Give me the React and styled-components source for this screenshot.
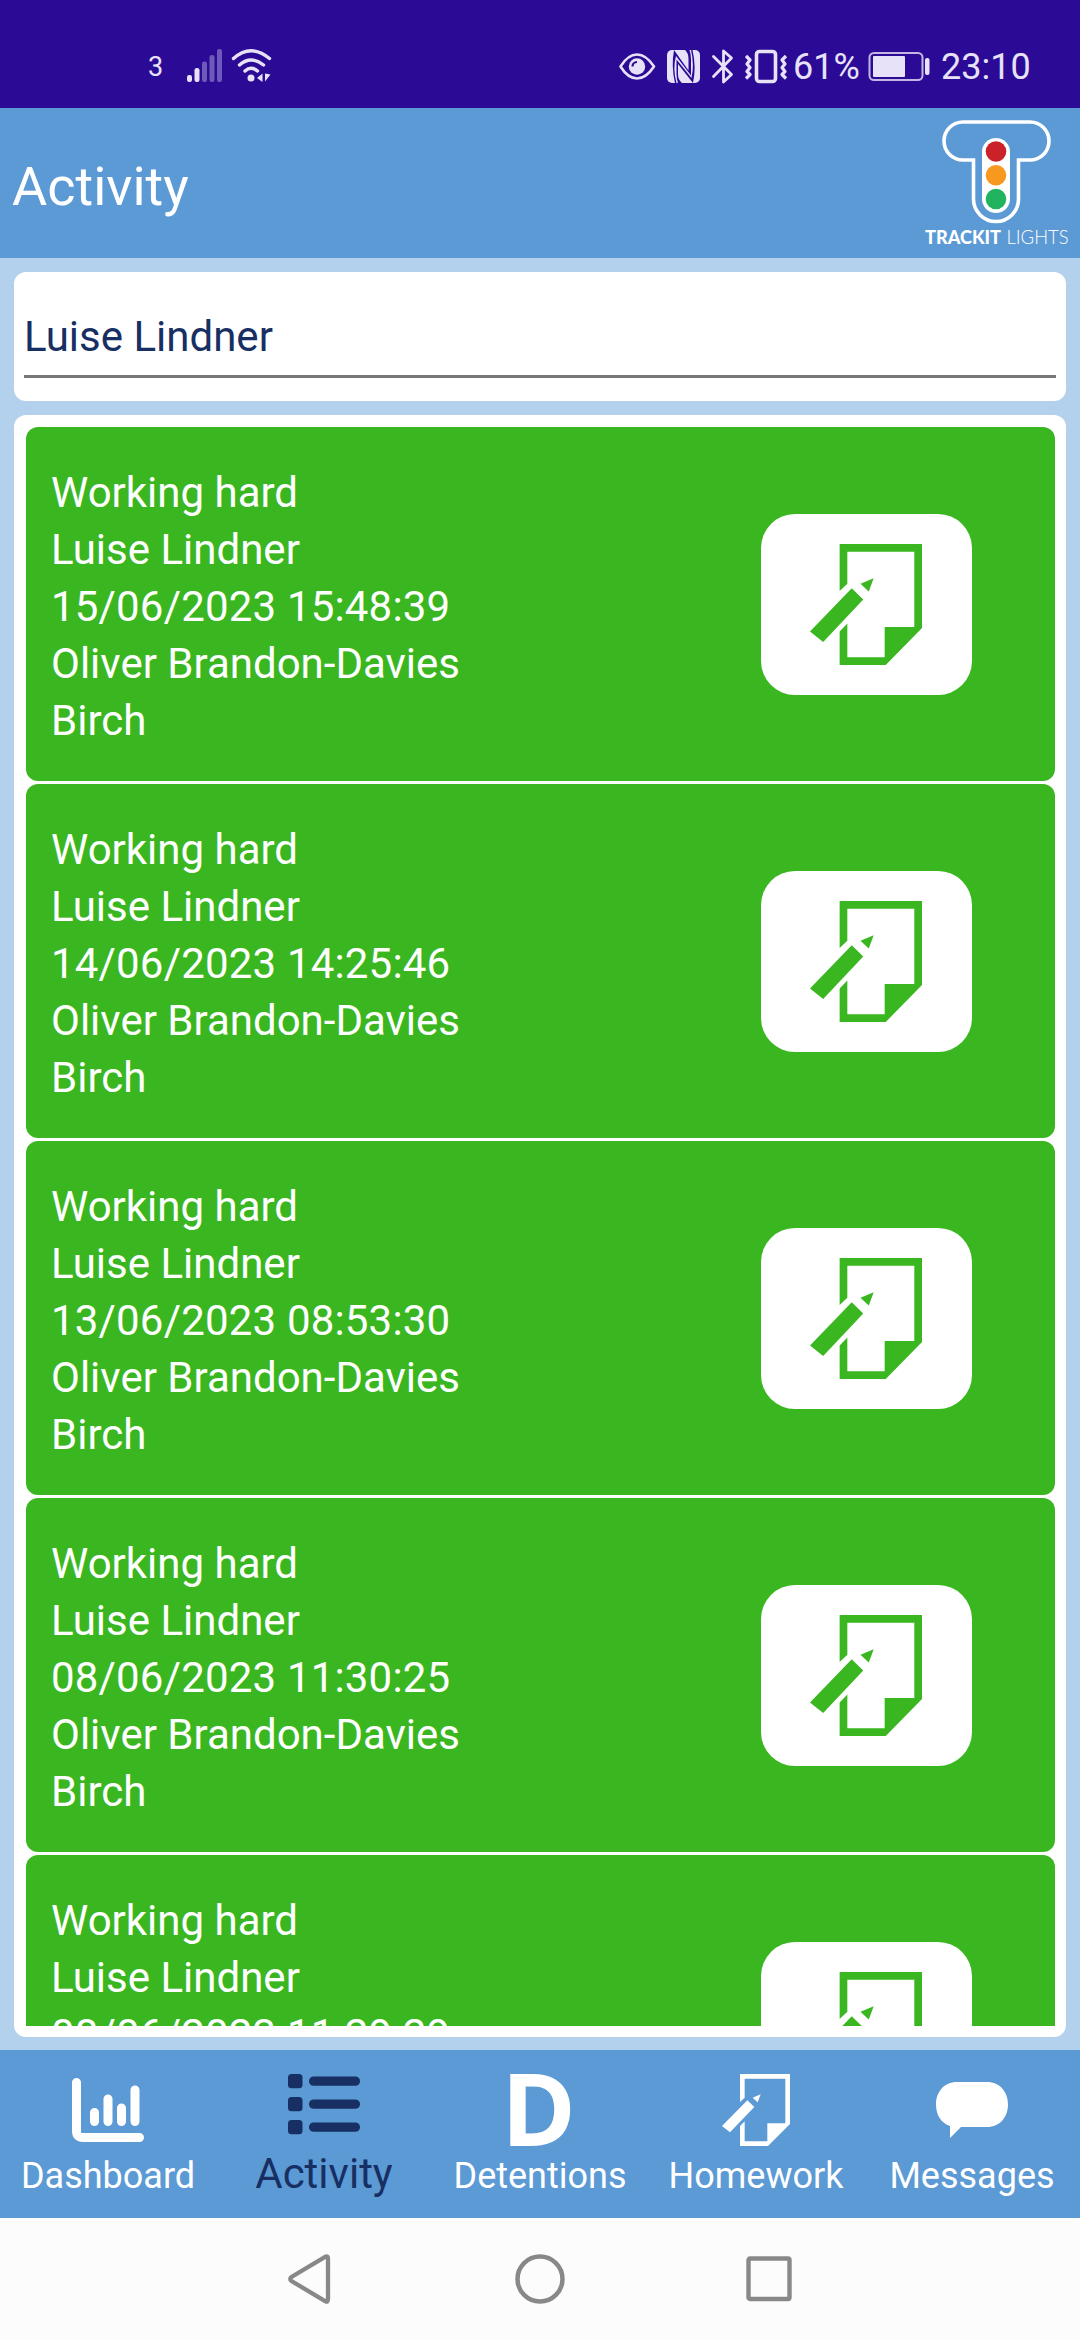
import React from 'react';
import styled, { createGlobalStyle, ThemeProvider } from 'styled-components';

const theme = {
  font: "Roboto, 'Noto Sans', sans-serif",
  status: '#2b0b96',
  statusFg: '#e8e2f8',
  primary: '#5b9ad5',
  background: '#b3d0ec',
  navy: '#172f62',
  green: '#3ab720',
};

const GlobalStyle = createGlobalStyle`
  body {
    margin: 0;
  }

  * {
    box-sizing: border-box;
  }
`;

const AppContainer = styled.div`
  font-family: ${props => props.theme.font};
  width: 1080px;
  height: 2340px;
  overflow: hidden;
  display: grid;
  grid-template-rows: 108px 150px 1fr 168px 122px;
  background: ${props => props.theme.background};
`;

const StatusBar = styled.div`
  display: flex;
  justify-content: space-between;
  padding: 48px 52px 0 148px;
  background: ${props => props.theme.status};
  color: ${props => props.theme.statusFg};
`;

const StatusGroup = styled.div`
  display: flex;
  align-items: flex-start;
  height: 38px;

  svg {
    display: block;
    flex: none;
  }
`;

const SimLabel = styled.span`
  width: 37px;
  font-size: 27px;
  line-height: 38px;
`;

const StatusText = styled.span`
  width: ${props => props.$width}px;
  font-size: 36px;
  line-height: 39px;
  white-space: nowrap;
`;

const Header = styled.header`
  display: flex;
  align-items: center;
  justify-content: space-between;
  padding: 0 8px 0 12px;
  background: ${props => props.theme.primary};
`;

const Title = styled.h1`
  margin: 8px 0 0;
  font-size: 54px;
  font-weight: 400;
  line-height: 64px;
  color: #fff;
`;

const Content = styled.main`
  display: flex;
  flex-direction: column;
  gap: 14px;
  min-height: 0;
  padding: 14px 14px 13px;
`;

const Panel = styled.section`
  padding: ${props => props.$padding};
  border-radius: 12px;
  background: #fff;
`;

const ListPanel = styled(Panel)`
  flex: 1;
  min-height: 0;
`;

const PupilSelect = styled.div`
  height: 106px;
  padding-top: 36px;
  border-bottom: 3px solid #777;
  font-size: 42px;
  line-height: 57px;
  color: ${props => props.theme.navy};
`;

const ActivityList = styled.div`
  display: flex;
  flex-direction: column;
  gap: 3px;
  height: 100%;
  overflow: hidden;
`;

const ActivityCard = styled.article`
  flex: none;
  display: flex;
  align-items: center;
  justify-content: space-between;
  height: 354px;
  padding: 0 83px 0 25px;
  border-radius: 12px;
  background: ${props => props.theme.green};
`;

const Details = styled.div`
  padding-top: 4px;
  font-size: 42px;
  line-height: 57px;
  color: #fff;
`;

const Timestamp = styled.div`
  letter-spacing: 0.18px;
`;

const IconTile = styled.div`
  width: 211px;
  height: 181px;
  padding: 30px 0 0 49px;
  border-radius: 34px;
  background: #fff;
  color: ${props => props.theme.green};
`;

const TabBar = styled.nav`
  display: grid;
  grid-template-columns: repeat(5, 1fr);
  background: ${props => props.theme.primary};
`;

const Tab = styled.div`
  display: flex;
  flex-direction: column;
  align-items: center;
  padding-top: 24px;
  color: ${props => (props.$active ? props.theme.navy : '#fff')};
`;

const TabIcon = styled.div`
  width: 72px;
  height: 72px;
  display: flex;
  justify-content: center;
`;

const TabLetter = styled.span`
  margin-right: 3px;
  font-family: 'Open Sans', sans-serif;
  font-size: 101px;
  font-weight: 700;
  line-height: 66px;
`;

const TabLabel = styled.span`
  font-size: ${props => (props.$active ? 42 : 36)}px;
  line-height: ${props => (props.$active ? 56 : 60)}px;
`;

const SystemBar = styled.div`
  display: flex;
  justify-content: center;
  padding-top: 36px;
  gap: 181px;
  background: #fcfcfc;
`;

const SignalIcon = () => (
  <svg width="38" height="34" viewBox="0 0 38 34" fill="currentColor">
    <rect x="2" y="27" width="5" height="7" rx="2.2" />
    <rect x="9.5" y="20" width="5" height="14" rx="2.2" />
    <g opacity="0.36">
      <rect x="17" y="13.5" width="5" height="20.5" rx="2.2" />
      <rect x="24.5" y="7" width="5" height="27" rx="2.2" />
      <rect x="32" y="1" width="5" height="33" rx="2.2" />
    </g>
  </svg>
);

const WifiIcon = () => (
  <svg width="52" height="36" viewBox="2 0 52 36" fill="none" stroke="currentColor">
    <g strokeWidth="3.4" strokeLinecap="round">
      <path d="M12.5 10.5Q30 -5 48.5 10.5" />
      <path d="M18.5 17Q30 7 42.5 17" />
      <path d="M24 23Q30 17.5 36.5 23" />
    </g>
    <circle cx="30" cy="30" r="3.5" fill="currentColor" stroke="none" />
    <path d="M36 30l5.5-4.5v8.5zM44 25.5v8l5.500-7z" fill="currentColor" stroke="none" />
  </svg>
);

const EyeIcon = () => (
  <svg width="48" height="36" viewBox="0 0 48 36">
    <path
      d="M1.500 18.500Q9 6.500 18 6.500T35 18.500Q27 30.500 18 30.500T1.500 18.500Z"
      fill="none"
      stroke="currentColor"
      strokeWidth="2.6"
      strokeLinejoin="round"
    />
    <circle cx="18" cy="18.5" r="8.2" fill="currentColor" />
    <path d="M13.5 18.5a4.5 4.5 0 0 1 4.500-4.500" fill="none" stroke="#2b0b96" strokeWidth="2.2" />
  </svg>
);

const NfcIcon = () => (
  <svg width="44" height="36" viewBox="0 0 44 36">
    <rect y="2" width="33" height="33" rx="5" fill="currentColor" />
    <g fill="#2b0b96">
      <path d="M7 2L21.500 22.500V11Q21.500 5 18 2H22.500Q24 6 24 11V27.500L9 8Q5.500 20 9.500 35H8Q4 18 7 2Z" />
      <path d="M26 35L11 16V26Q11 32 15 35H11Q9.500 31 9.500 26V11.500L24.500 30Q27.500 17 24 2H25.500Q29.500 19 26 35Z" />
    </g>
  </svg>
);

const BluetoothIcon = () => (
  <svg width="34" height="36" viewBox="0 0 34 36" fill="none" stroke="currentColor">
    <path d="M2.500 8.500L20.500 26.500L12.500 34V3L20.500 10L2.500 28.500" strokeWidth="2.8" strokeLinecap="round" strokeLinejoin="round" />
  </svg>
);

const VibrateIcon = () => (
  <svg width="48" height="36" viewBox="0 0 48 36" fill="none" stroke="currentColor">
    <rect x="11.5" y="3.5" width="19" height="30" rx="3" strokeWidth="3.6" />
    <g strokeWidth="3.2" strokeLinejoin="round">
      <path d="M1 8l4 4-3 4 3 3.500-3 4 3 3-4 4" />
      <path d="M41 8l-4 4 3 4-3 3.500 3 4-3 3 4 4" />
    </g>
  </svg>
);

const BatteryIcon = () => (
  <svg width="73" height="36" viewBox="0 0 73 36">
    <rect x="1.5" y="5" width="53" height="27" rx="4.5" fill="none" stroke="currentColor" strokeWidth="2" opacity="0.8" />
    <rect x="5" y="8" width="32" height="21" rx="1" fill="currentColor" />
    <rect x="57" y="10" width="4.5" height="17" rx="2" fill="currentColor" />
  </svg>
);

const Logo = () => (
  <svg width="150" height="150" viewBox="0 0 150 150">
    <path
      d="M41 14H108A19 19 0 0 1 108 52H96.500V91A22.500 22.500 0 0 1 51.500 91V52H41A19 19 0 0 1 41 14Z"
      fill="none"
      stroke="#fff"
      strokeWidth="3.6"
    />
    <rect x="60" y="30" width="28" height="75" rx="14" fill="#fff" />
    <circle cx="74" cy="43.5" r="10.3" fill="#cb2128" />
    <circle cx="74" cy="67.3" r="10.3" fill="#f7981f" />
    <circle cx="74" cy="91" r="10.3" fill="#22b35e" />
    <g fill="#fff" fontFamily="Lato, sans-serif" fontSize="19.5">
      <text x="3" y="135.5" fontWeight="900" textLength="76" lengthAdjust="spacingAndGlyphs">
        TRACKIT
      </text>
      <text x="84.5" y="135.5" fontWeight="300" textLength="62" lengthAdjust="spacingAndGlyphs">
        LIGHTS
      </text>
    </g>
  </svg>
);

const HomeworkIcon = ({ width, height }) => (
  <svg width={width} height={height} viewBox="0 0 204 216" preserveAspectRatio="none" fill="currentColor">
    <path d="M54 84V0H204V150L138 216H54V156L68 142V202H136V148H190V14H68V71Z" fillRule="evenodd" />
    <path d="M0 156L76 79L97 99L24 175Z" />
    <path d="M92 71L116 61L107 85Z" />
  </svg>
);

const DashboardIcon = () => (
  <svg width="72" height="72" viewBox="0 0 72 72" fill="none" stroke="currentColor" strokeWidth="9" strokeLinecap="round">
    <path d="M4.500 8.500V57Q4.500 63.500 11 63.500H67.500" />
    <path d="M22.500 38.500V47.500M36 25V47.500M49.500 34V47.500M63 16V47.500" />
  </svg>
);

const ListIcon = () => (
  <svg width="72" height="72" viewBox="0 0 72 72" fill="currentColor">
    {[0, 23, 46].map(y => (
      <g key={y}>
        <rect y={y} width="14.5" height="14.3" rx="3.5" />
        <rect x="21" y={y + 2.5} width="51" height="9.3" rx="4.6" />
      </g>
    ))}
  </svg>
);

const MessageIcon = () => (
  <svg width="72" height="72" viewBox="0 0 72 72" fill="currentColor">
    <path d="M21 8H51C64 8 72 18 72 30.500S64 53 51 53H25L14 64V52C5 49 0 41 0 30.500C0 18 8 8 21 8Z" />
  </svg>
);

const BackIcon = () => (
  <svg width="46" height="50" viewBox="0 0 46 50" fill="none" stroke="#888" strokeWidth="4.3">
    <path d="M37.500 2.700Q40 1.500 40 5V45Q40 48.500 37.500 47.300L3.500 27Q1 25 3.500 23Z" />
  </svg>
);

const HomeIcon = () => (
  <svg width="50" height="50" viewBox="0 0 50 50" fill="none" stroke="#888" strokeWidth="4.5">
    <circle cx="25" cy="25" r="22.5" />
  </svg>
);

const RecentsIcon = () => (
  <svg width="46" height="50" viewBox="0 0 46 50" fill="none" stroke="#888" strokeWidth="4.4">
    <rect x="2.5" y="4.5" width="41" height="40.5" rx="1.5" />
  </svg>
);

const activities = [
  '15/06/2023 15:48:39',
  '14/06/2023 14:25:46',
  '13/06/2023 08:53:30',
  '08/06/2023 11:30:25',
  '08/06/2023 11:29:29',
];

const tabs = [
  { label: 'Dashboard', icon: <DashboardIcon /> },
  { label: 'Activity', icon: <ListIcon />, active: true },
  { label: 'Detentions', icon: <TabLetter>D</TabLetter> },
  { label: 'Homework', icon: <HomeworkIcon width={68} height={72} /> },
  { label: 'Messages', icon: <MessageIcon /> },
];

const Activity = ({ date }) => (
  <ActivityCard>
    <Details>
      <div>Working hard</div>
      <div>Luise Lindner</div>
      <Timestamp>{date}</Timestamp>
      <div>Oliver Brandon-Davies</div>
      <div>Birch</div>
    </Details>
    <IconTile>
      <HomeworkIcon width={112} height={121} />
    </IconTile>
  </ActivityCard>
);

const App = () => (
  <ThemeProvider theme={theme}>
    <GlobalStyle />
    <AppContainer>
      <StatusBar>
        <StatusGroup>
          <SimLabel>3</SimLabel>
          <SignalIcon />
          <WifiIcon />
        </StatusGroup>
        <StatusGroup>
          <EyeIcon />
          <NfcIcon />
          <BluetoothIcon />
          <VibrateIcon />
          <StatusText $width={75}>61%</StatusText>
          <BatteryIcon />
          <StatusText $width={87}>23:10</StatusText>
        </StatusGroup>
      </StatusBar>

      <Header>
        <Title>Activity</Title>
        <Logo />
      </Header>

      <Content>
        <Panel $padding="0 10px 23px">
          <PupilSelect>Luise Lindner</PupilSelect>
        </Panel>
        <ListPanel $padding="12px 11px 11px 12px">
          <ActivityList>
            {activities.map(date => (
              <Activity key={date} date={date} />
            ))}
          </ActivityList>
        </ListPanel>
      </Content>

      <TabBar>
        {tabs.map(({ label, icon, active }) => (
          <Tab key={label} $active={active}>
            <TabIcon>{icon}</TabIcon>
            <TabLabel $active={active}>{label}</TabLabel>
          </Tab>
        ))}
      </TabBar>

      <SystemBar>
        <BackIcon />
        <HomeIcon />
        <RecentsIcon />
      </SystemBar>
    </AppContainer>
  </ThemeProvider>
);

export default App;
